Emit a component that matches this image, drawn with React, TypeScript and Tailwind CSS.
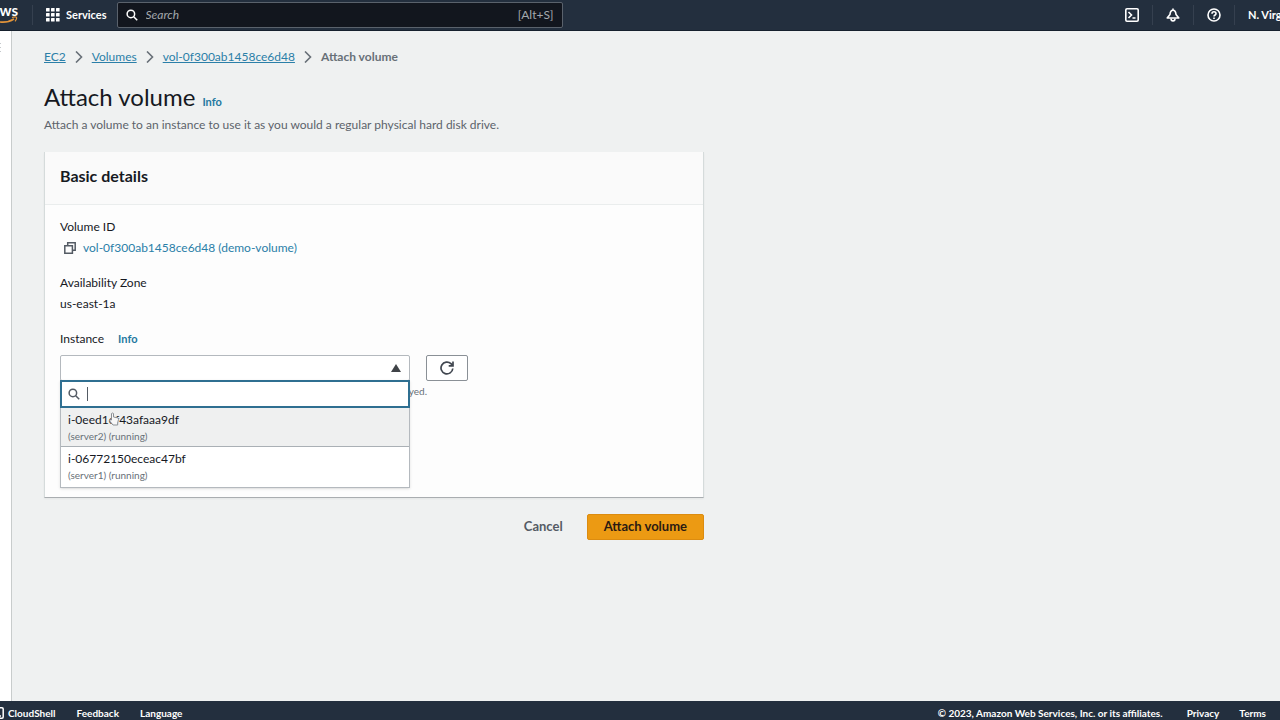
import { ReactNode } from "react";

const instances = [
  { id: "i-0eed1ef43afaaa9df", note: "(server2) (running)", active: true },
  { id: "i-06772150eceac47bf", note: "(server1) (running)", active: false },
];

const SearchIcon = ({ className }: { className: string }) => (
  <svg viewBox="0 0 16 16" fill="none" stroke="currentColor" strokeWidth="2" className={className} aria-hidden="true">
    <circle cx="6.5" cy="6.5" r="5" />
    <path d="M10 10l5 5" />
  </svg>
);

const Chevron = () => (
  <svg viewBox="0 0 8 12" fill="none" stroke="#687078" strokeWidth="1.6" className="w-2 h-3" aria-hidden="true">
    <path d="M1 0.5L6.500 6L1 11.500" />
  </svg>
);

const Divider = () => <span className="w-px h-5 bg-[#35404f]" />;

const InfoLink = () => (
  <a href="#info" className="text-[11px] leading-4 font-bold text-[#2478a0]">
    Info
  </a>
);

const IconButton = ({ label, children }: { label: string; children: ReactNode }) => (
  <button type="button" aria-label={label} className="w-10 h-full flex items-center justify-center">
    {children}
  </button>
);

const Header = () => (
  <header className="h-[31px] shrink-0 flex items-center bg-[#232f3e] text-white border-b border-[#16202d]">
    <a href="#home" aria-label="AWS home" className="w-8 shrink-0 h-full overflow-hidden flex justify-end pr-[14px]">
      <span className="w-8 shrink-0 flex flex-col items-end">
        <span className="text-[15px] leading-5 font-bold">aws</span>
        <svg viewBox="0 0 32 8" fill="none" stroke="#e2943a" className="w-8 h-2 -mt-1" aria-hidden="true">
          <path d="M2 1c8 6.500 19 6.500 26 2" strokeWidth="1.6" />
          <path d="M26 1.500c2-.7 4-.7 4.500-.2s-.3 2.800-1.500 4" strokeWidth="1.2" />
        </svg>
      </span>
    </a>
    <Divider />
    <button type="button" className="flex items-center gap-[6px] pl-[13px] pr-[10px] text-[11px] font-bold">
      <svg viewBox="0 0 14 14" fill="currentColor" className="w-[14px] h-[14px]" aria-hidden="true">
        {[0, 5, 10].map((y) => [0, 5, 10].map((x) => <rect key={`${x}-${y}`} x={x} y={y} width="3.6" height="3.6" rx="0.5" />))}
      </svg>
      Services
    </button>
    <div className="w-[446px] h-[26px] flex items-center gap-2 px-2 border border-[#5a626c] rounded-xs bg-[#12161e]">
      <SearchIcon className="w-3 h-3" />
      <input
        type="text"
        aria-label="Search"
        placeholder="Search"
        className="flex-1 min-w-0 bg-transparent outline-none text-[12px] italic placeholder:text-[#a3a8ad]"
      />
      <span className="text-[12px] text-[#a3a8ad]">[Alt+S]</span>
    </div>
    <div className="ml-auto h-full flex items-center shrink-0">
      <IconButton label="CloudShell">
        <svg viewBox="0 0 14 14" fill="none" stroke="currentColor" strokeWidth="1.6" className="w-[14px] h-[14px]" aria-hidden="true">
          <rect x="0.8" y="0.8" width="12.4" height="12.4" rx="1.2" />
          <path d="M3.500 4l3 3-3 3M7.500 10h3" />
        </svg>
      </IconButton>
      <Divider />
      <IconButton label="Notifications">
        <svg viewBox="0 0 14 14" fill="none" stroke="currentColor" strokeWidth="1.6" strokeLinejoin="round" className="w-[14px] h-[14px]" aria-hidden="true">
          <path d="M7 .5v2M1.200 10L4 6.500C4.200 3.800 5.300 2.200 7 2.200s2.800 1.600 3 4.300l2.800 3.500z" />
          <path d="M5 10.500c0 3.200 4 3.200 4 0" />
        </svg>
      </IconButton>
      <Divider />
      <IconButton label="Help">
        <svg viewBox="0 0 14 14" fill="none" stroke="currentColor" strokeWidth="1.6" className="w-[14px] h-[14px]" aria-hidden="true">
          <circle cx="7" cy="7" r="6" />
          <path d="M5 5.700c0-2.600 4-2.600 4 0C9 7 7 7 7 8.600M7 9.500v1.400" />
        </svg>
      </IconButton>
      <Divider />
      <button type="button" className="w-[45px] pl-[13px] overflow-hidden whitespace-nowrap text-left text-[11px] font-bold">
        N. Virginia
      </button>
    </div>
  </header>
);

const Breadcrumbs = () => (
  <nav aria-label="Breadcrumbs" className="flex items-center gap-[9px] text-[12px] leading-5 text-[#2b7fa8]">
    <a href="#ec2" className="underline">EC2</a>
    <Chevron />
    <a href="#volumes" className="underline">Volumes</a>
    <Chevron />
    <a href="#volume" className="underline">vol-0f300ab1458ce6d48</a>
    <Chevron />
    <span className="font-bold text-[#687078]">Attach volume</span>
  </nav>
);

const InstancePicker = () => (
  <div className="relative w-[350px]">
    <select
      id="instance"
      className="block w-full h-[26px] appearance-none border border-[#b4b9be] rounded-xs bg-white text-[12px] px-2"
    >
      <option value=""></option>
    </select>
    <svg viewBox="0 0 10 8" fill="#3f4347" className="absolute right-[9px] top-[9px] w-[10px] h-2" aria-hidden="true">
      <path d="M5 0l5 8H0z" />
    </svg>
    <div className="absolute inset-x-0 top-[25px] z-10 bg-white shadow-sm">
      <div className="h-7 flex items-center gap-[7px] px-[6px] border-2 border-[#2f6f91]">
        <SearchIcon className="w-3 h-3 text-[#545b64]" />
        <span className="w-px h-[14px] bg-[#545b64]" />
        <input type="text" aria-label="Filter instances" className="flex-1 min-w-0 outline-none text-[12px]" />
      </div>
      <ul role="listbox" aria-label="Instances" className="border-x border-b border-[#b4b9be]">
        {instances.map((item) => (
          <li
            key={item.id}
            role="option"
            aria-selected={item.active}
            className={
              item.active
                ? "h-[39px] px-[7px] pt-1 bg-[#eff0f0] border-b border-[#aab0b5]"
                : "h-10 px-[7px] pt-1"
            }
          >
            <div className="text-[12px] leading-4">{item.id}</div>
            <div className="text-[10px] leading-4 text-[#687078]">{item.note}</div>
          </li>
        ))}
      </ul>
      {/* pointer over the first option */}
      <svg viewBox="0 0 12 14" fill="#f7f7f7" stroke="#8a8f94" className="absolute left-12 top-8 w-3 h-[14px]" aria-hidden="true">
        <path d="M3.500 8V1.500q1-1 2 0V5l4 .8q1 .3 1 1.500L9.700 11v2H5L1.500 8.800q.5-1.500 2-.8z" />
      </svg>
    </div>
  </div>
);

const App = () => {
  return (
    <div className="h-screen flex flex-col overflow-hidden bg-[#eff1f1] text-[#16191f] font-['Lato','Open_Sans',sans-serif]">
      <Header />
      <div className="flex-1 min-h-0 flex">
        <aside className="w-3 shrink-0 bg-white border-r border-[#c8cccc] pt-3">
          <svg viewBox="0 0 2 10" fill="#c5c9cc" className="w-[2px] h-[10px]" aria-hidden="true">
            <path d="M0 0h1v1H0zM0 4h1v1H0zM0 8h1v1H0z" />
          </svg>
        </aside>
        <main className="flex-1 min-w-0 px-8 pt-4">
          <Breadcrumbs />
          <div className="mt-[14px] flex items-baseline gap-[7px]">
            <h1 className="text-[24px] leading-8">Attach volume</h1>
            <InfoLink />
          </div>
          <p className="mt-[2px] text-[12px] leading-5 text-[#5c636b]">
            Attach a volume to an instance to use it as you would a regular physical hard disk drive.
          </p>

          <form className="mt-[17px] w-full max-w-[660px]">
            <section className="bg-[#fdfdfd] border border-t-0 border-[#d5dbdb] border-b-[#a9adb0] shadow-xs">
              <div className="px-[15px] pb-1 h-[53px] flex items-center bg-[#fafafa] border-b border-[#eaeded]">
                <h2 className="text-[16px] leading-5 font-bold">Basic details</h2>
              </div>
              <div className="px-[15px] pt-3 pb-24 text-[12px] leading-5">
                <div>Volume ID</div>
                <div className="mt-px flex items-center gap-[7px] pl-1">
                  <svg viewBox="0 0 12 12" fill="none" stroke="#545b64" strokeWidth="1.5" className="w-3 h-3" aria-hidden="true">
                    <path d="M3.700 3.500V.8h7.500v7.500H8.500M.8 3.700h7.600v7.500H.8z" />
                  </svg>
                  <a href="#volume" className="text-[#2b7fa8]">vol-0f300ab1458ce6d48 (demo-volume)</a>
                </div>
                <div className="mt-[15px]">Availability Zone</div>
                <div className="mt-px">us-east-1a</div>
                <div className="mt-[15px] flex items-center gap-[14px]">
                  <label htmlFor="instance">Instance</label>
                  <InfoLink />
                </div>
                <div className="mt-[6px] flex items-start gap-4">
                  <InstancePicker />
                  <button
                    type="button"
                    aria-label="Refresh instances"
                    className="w-[42px] h-[26px] flex items-center justify-center border border-[#8a9096] rounded-xs bg-white"
                  >
                    <svg viewBox="0 0 14 14" fill="none" stroke="#414750" strokeWidth="1.7" className="w-[14px] h-[14px]" aria-hidden="true">
                      <path d="M12.800 7.500A5.900 5.900 0 1 1 11 2.700l1.500 1.800M13 .5v4.300H8.700" />
                    </svg>
                  </button>
                </div>
                <p className="w-[367px] text-right whitespace-nowrap text-[10px] leading-5 text-[#687078]">
                  Only instances in the same Availability Zone are displayed.
                </p>
              </div>
            </section>

            <div className="mt-4 flex justify-end gap-2 text-[13px] font-bold">
              <button type="button" className="h-[26px] px-4 text-[#545b64]">
                Cancel
              </button>
              <button type="submit" className="h-[26px] px-4 rounded-xs border border-[#dc8c10] bg-[#ec9a13] text-[#2b1a12]">
                Attach volume
              </button>
            </div>
          </form>
        </main>
      </div>

      <footer className="h-[19px] shrink-0 flex bg-[#232f3e] text-white text-[10px] leading-6 font-bold">
        <a href="#cloudshell" className="flex items-start gap-1">
          <svg viewBox="0 0 4 12" fill="none" stroke="currentColor" strokeWidth="1.5" className="w-1 h-3 mt-[6px]" aria-hidden="true">
            <path d="M0 .8h2q1.200 0 1.200 1.200v8q0 1.200-1.200 1.200H0M0 9h1" />
          </svg>
          CloudShell
        </a>
        <a href="#feedback" className="ml-[21px]">Feedback</a>
        <a href="#language" className="ml-[21px]">Language</a>
        <span className="ml-auto">© 2023, Amazon Web Services, Inc. or its affiliates.</span>
        <a href="#privacy" className="ml-6">Privacy</a>
        <a href="#terms" className="ml-5 mr-[14px]">Terms</a>
      </footer>
    </div>
  );
};

export default App;
